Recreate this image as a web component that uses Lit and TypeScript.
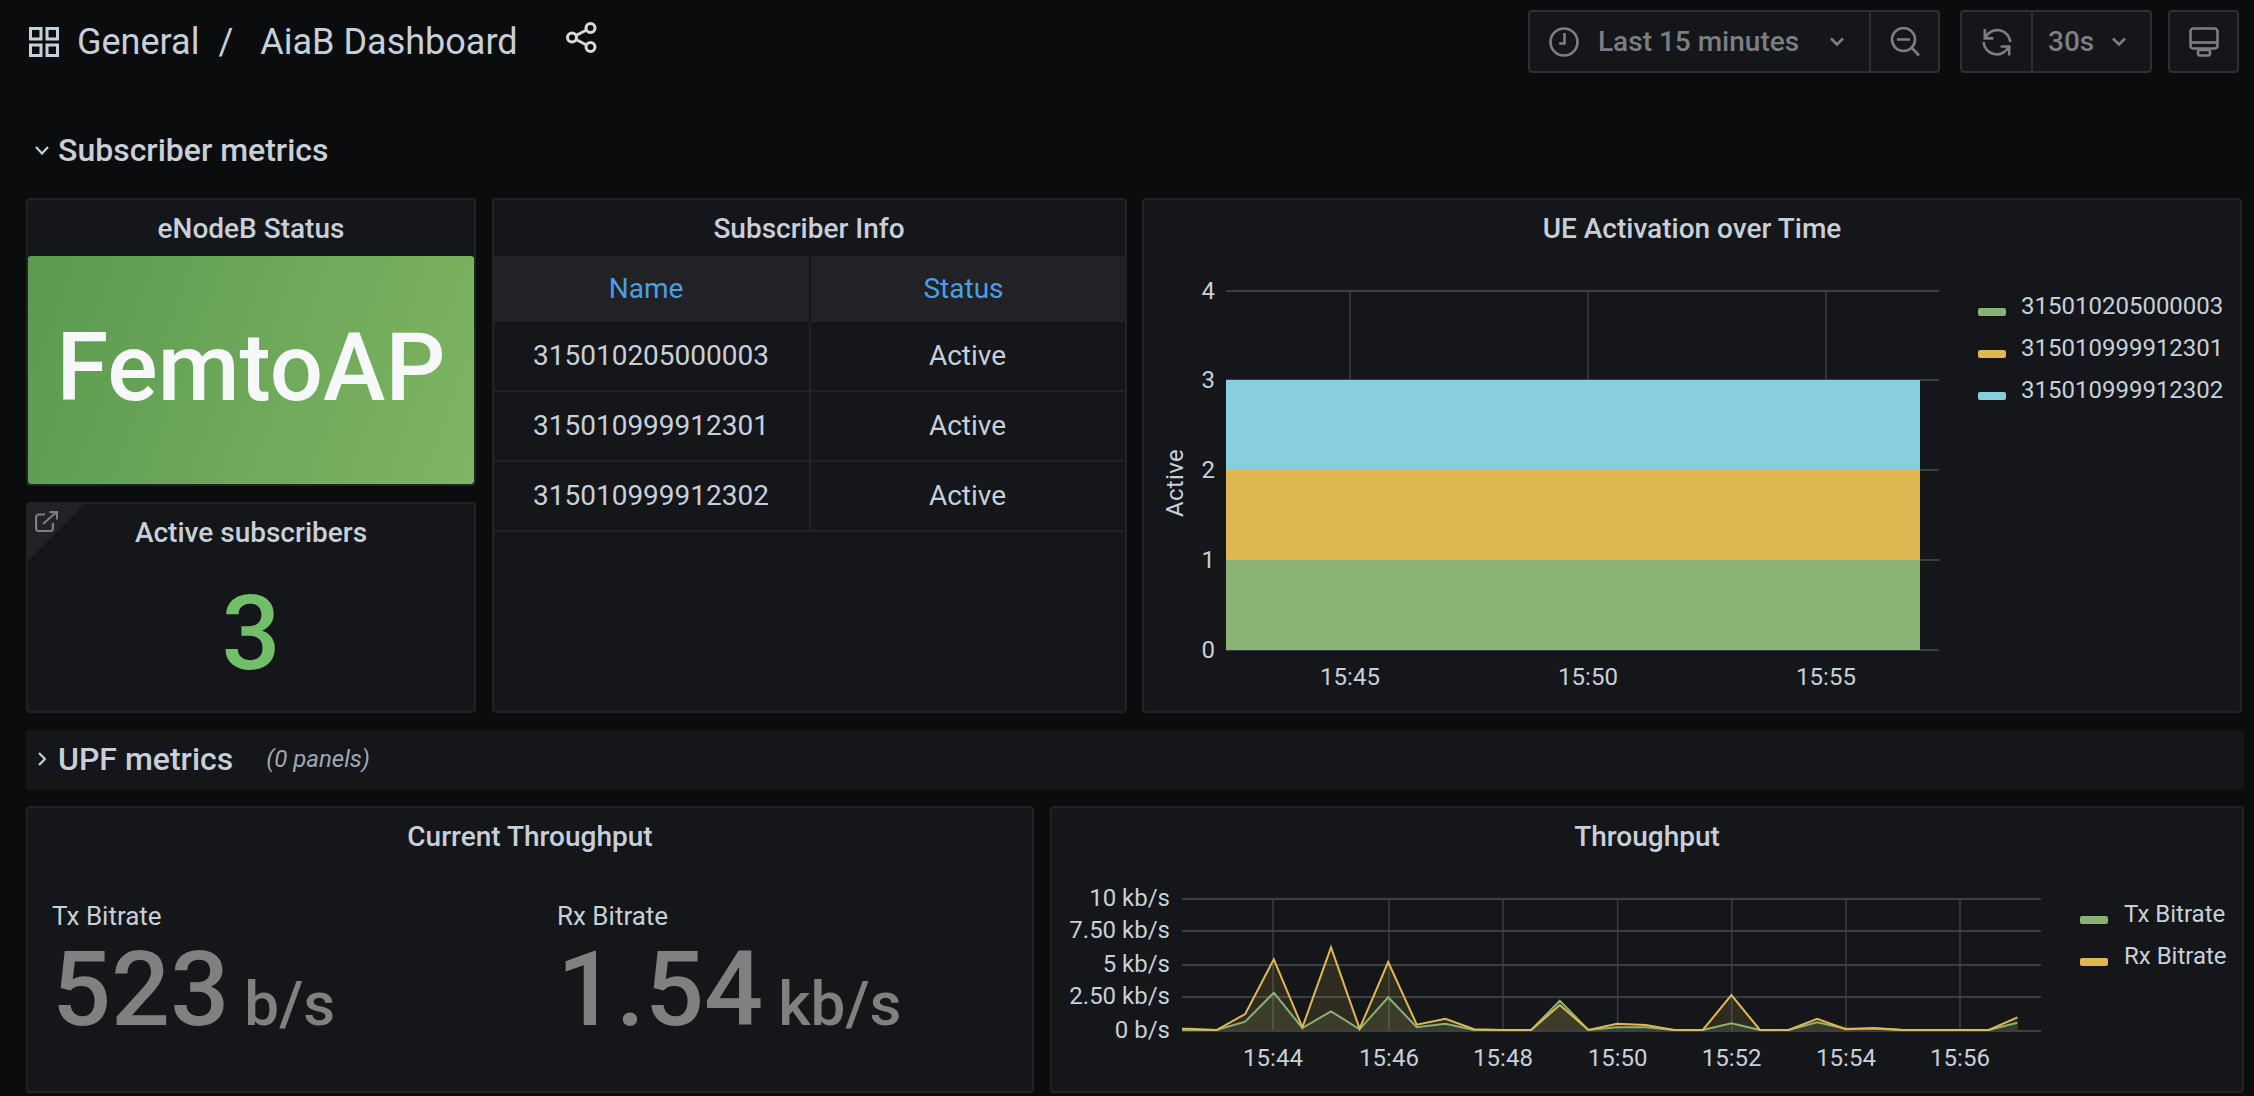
import { LitElement, html, css, svg } from 'lit';
import { customElement } from 'lit/decorators.js';

const GRID = '#3c3e42';
const GREEN = '#8ab274';
const YELLOW = '#e0b852';
const BLUE = '#87cedf';

// heights above the baseline, one sample per 30s
const RX = [1.3, 0, 16, 70.7, 2.7, 82.7, 1.3, 68, 5.3, 11.3, 0.7, 0, 0, 25, 0, 6.3, 5, 0, 0, 35, 0, 0, 11.3, 0.7, 2, 0, 0, 0, 0, 12.7];
const TX = [0, 0, 8.3, 37.3, 2, 18.7, 0.7, 32.7, 2.7, 6.3, 0, 0, 0, 29.3, 0, 2.7, 2.7, 0, 0, 6.7, 0, 0, 7.7, 1.3, 1.3, 0, 0, 0, 0, 7.3];

const SUBSCRIBERS = ['315010205000003', '315010999912301', '315010999912302'];

@customElement('ue-chart')
export class UeChart extends LitElement {
  static styles = css`
    :host { display: flex; flex: 1; min-height: 0; }
    svg { display: block; flex: none; }
    text { font: 400 24px 'Roboto', sans-serif; fill: #c7d0d9; }
    .ylabel { letter-spacing: 0.3px; }
    .legend { display: flex; flex-direction: column; padding: 29px 0 0 33px; }
    .item { display: flex; align-items: center; gap: 15px; height: 42px; font: 400 24px 'Roboto', sans-serif; color: #c7d0d9; white-space: nowrap; }
    .swatch { width: 28px; height: 8px; border-radius: 2px; margin-top: 12px; }
  `;

  render() {
    const ys = [35, 124, 214, 304, 394];
    const xs = [206, 444, 682];
    return html`
      <svg width="801" height="455" viewBox="0 0 801 455">
        ${ys.map((y) => svg`<line x1="82" x2="795" y1=${y} y2=${y} stroke=${GRID} stroke-width="2"></line>`)}
        ${xs.map((x) => svg`<line x1=${x} x2=${x} y1="34" y2="394" stroke=${GRID} stroke-width="1.5"></line>`)}
        <rect x="82" y="124" width="694" height="90" fill=${BLUE}></rect>
        <rect x="82" y="214" width="694" height="90" fill=${YELLOW}></rect>
        <rect x="82" y="304" width="694" height="90" fill=${GREEN}></rect>
        ${ys.map((y, i) => svg`<text x="71" y=${y + 8} text-anchor="end">${4 - i}</text>`)}
        ${xs.map((x, i) => svg`<text x=${x} y="429" text-anchor="middle">15:${45 + i * 5}</text>`)}
        <text class="ylabel" transform="translate(39 227) rotate(-90)" text-anchor="middle">Active</text>
      </svg>
      <div class="legend">
        ${SUBSCRIBERS.map(
          (s, i) => html`<div class="item"><span class="swatch" style="background:${[GREEN, YELLOW, BLUE][i]}"></span>${s}</div>`
        )}
      </div>
    `;
  }
}

@customElement('throughput-chart')
export class ThroughputChart extends LitElement {
  static styles = css`
    :host { display: flex; flex: 1; min-height: 0; }
    svg { display: block; flex: none; }
    text { font: 400 24px 'Roboto', sans-serif; fill: #c7d0d9; }
    .legend { display: flex; flex-direction: column; padding: 29px 0 0 28px; }
    .item { display: flex; align-items: center; gap: 16px; height: 42px; font: 400 24px 'Roboto', sans-serif; color: #c7d0d9; white-space: nowrap; }
    .swatch { width: 28px; height: 8px; border-radius: 2px; margin-top: 12px; }
  `;

  // chart space: page x - 1052, page y - 864
  private points(data: number[]) {
    return data.map((h, i) => `${136 + i * 28.6},${166 - h}`);
  }

  render() {
    const ys = [35, 67, 101, 133, 167];
    const labels = ['10 kb/s', '7.50 kb/s', '5 kb/s', '2.50 kb/s', '0 b/s'];
    const xs = [221, 337, 451, 565.6, 679.7, 794, 908];
    const rx = this.points(RX);
    const tx = this.points(TX);
    const area = (p: string[], first: number) => `M130,${166 - first} L${p.join(' L')} L966,166 L130,166 Z`;
    return html`
      <svg width="1000" height="227" viewBox="0 0 1000 227">
        ${ys.map((y) => svg`<line x1="130" x2="989" y1=${y} y2=${y} stroke=${GRID} stroke-width="2"></line>`)}
        ${xs.map((x) => svg`<line x1=${x} x2=${x} y1="34" y2="167" stroke=${GRID} stroke-width="1.5"></line>`)}
        <path d=${area(tx, 0)} fill=${GREEN} fill-opacity="0.13"></path>
        <path d=${area(rx, 1.3)} fill=${YELLOW} fill-opacity="0.13"></path>
        <polyline points=${`130,166 ${tx.join(' ')}`} fill="none" stroke=${GREEN} stroke-width="2"></polyline>
        <polyline points=${`130,164.7 ${rx.join(' ')}`} fill="none" stroke=${YELLOW} stroke-width="2"></polyline>
        ${ys.map((y, i) => svg`<text x="118" y=${y + 7} text-anchor="end">${labels[i]}</text>`)}
        ${xs.map((x, i) => svg`<text x=${x} y="202" text-anchor="middle">15:${44 + i * 2}</text>`)}
      </svg>
      <div class="legend">
        <div class="item"><span class="swatch" style="background:${GREEN}"></span>Tx Bitrate</div>
        <div class="item"><span class="swatch" style="background:${YELLOW}"></span>Rx Bitrate</div>
      </div>
    `;
  }
}

@customElement('app-root')
export class AppRoot extends LitElement {
  static styles = css`
    :host {
      display: block;
      height: 1096px;
      overflow: hidden;
      background: #0b0c0e;
      color: #c7d0d9;
      font-family: 'Roboto', sans-serif;
    }
    .nav {
      display: flex;
      justify-content: space-between;
      height: 84px;
      padding: 10px 15px 0 29px;
      box-sizing: border-box;
    }
    .crumbs { display: flex; align-items: center; height: 63px; font-size: 36px; color: #c7d0d9; }
    .crumbs svg { display: block; }
    .crumbs .page { margin-left: 18px; }
    .crumbs .sep { margin: 0 27px 0 19px; }
    .crumbs .share { margin-left: 48px; margin-top: -8px; }
    .tools { display: flex; }
    .group {
      display: flex;
      height: 63px;
      box-sizing: border-box;
      background: #141619;
      border: 2px solid #2c3035;
      border-radius: 4px;
      color: #7b7e84;
      font-size: 28px;
      font-weight: 500;
    }
    .group svg { display: block; }
    .cell { display: flex; align-items: center; justify-content: center; }
    .cell + .cell { border-left: 2px solid #2c3035; }
    .range { width: 339px; justify-content: flex-start; padding-left: 19px; box-sizing: border-box; gap: 19px; }
    .range .chev { margin-left: 12px; }
    .zoom { flex: 1; }
    .g1 { width: 412px; }
    .g2 { width: 192px; margin-left: 20px; }
    .g3 { width: 71px; margin-left: 16px; }
    .sync { width: 69px; }
    .every { flex: 1; justify-content: flex-start; padding-left: 15px; gap: 18px; }

    .row-title {
      display: flex;
      align-items: center;
      height: 114px;
      padding: 18px 0 0 35px;
      box-sizing: border-box;
      font-size: 32px;
      font-weight: 500;
      color: #c7d0d9;
      gap: 9px;
    }
    .top {
      display: grid;
      grid-template-columns: 450px 635px 1100px;
      column-gap: 15.5px;
      height: 515px;
      margin: 0 10px 0 26px;
    }
    .left { display: grid; grid-template-rows: 288px 211px; row-gap: 16px; min-height: 0; }
    .panel {
      position: relative;
      display: flex;
      flex-direction: column;
      min-height: 0;
      box-sizing: border-box;
      background: #141619;
      border: 2px solid #202226;
      border-radius: 4px;
      overflow: hidden;
    }
    .title {
      flex: none;
      height: 56px;
      line-height: 58px;
      text-align: center;
      font-size: 28px;
      font-weight: 500;
      color: #c7d0d9;
    }
    .status {
      height: 228px;
      padding-bottom: 4px;
      box-sizing: border-box;
      display: flex;
      align-items: center;
      justify-content: center;
      border-radius: 3px;
      background: linear-gradient(110deg, #5b9a50, #7fb562);
      color: #f7f8fa;
      font-size: 94px;
      font-weight: 500;
    }
    .corner {
      position: absolute;
      left: 0;
      top: 0;
      width: 56px;
      height: 56px;
      background: linear-gradient(135deg, #202226 50%, transparent 50%);
    }
    .corner svg { position: absolute; left: 7px; top: 7px; }
    .big {
      flex: 1;
      display: flex;
      align-items: center;
      justify-content: center;
      padding-bottom: 4px;
      color: #73bf69;
      font-size: 104px;
      font-weight: 500;
    }
    .head, .tr { display: grid; grid-template-columns: 315px 1fr; text-align: center; font-size: 28px; }
    .head { height: 66px; background: #202226; color: #4a9fe6; }
    .head div { display: flex; align-items: center; justify-content: center; padding: 0 10px 2px 0; }
    .head div + div { border-left: 2px solid #141619; padding-right: 8px; }
    .tr { height: 70px; box-sizing: border-box; border-bottom: 2px solid #202226; }
    .tr div { display: flex; align-items: center; justify-content: center; padding-bottom: 2px; }
    .tr div + div { border-left: 2px solid #202226; }

    .upf {
      display: flex;
      align-items: center;
      height: 60px;
      box-sizing: border-box;
      margin: 17px 10px 16px 26px;
      padding: 0 0 2px 12px;
      background: #141619;
      font-size: 32px;
      font-weight: 500;
      color: #c7d0d9;
      gap: 12px;
    }
    .upf small { margin-left: 21px; font-size: 24px; font-weight: 400; font-style: italic; color: #9fa7b3; }
    .bottom {
      display: grid;
      grid-template-columns: 1008px 1194px;
      column-gap: 16px;
      height: 287px;
      margin: 0 10px 0 26px;
    }
    .stats { flex: 1; display: grid; grid-template-columns: 505px 1fr; padding: 33px 0 0 24px; }
    .stat .name { height: 38px; line-height: 38px; font-size: 26px; color: #c7d0d9; }
    .stat .value { display: flex; align-items: baseline; gap: 15px; font-size: 104px; line-height: 110px; font-weight: 500; color: #808080; }
    .stat .value span { font-size: 62px; }
  `;

  render() {
    return html`
      <div class="nav">
        <div class="crumbs">
          <svg width="30" height="30" viewBox="0 0 30 30" fill="none" stroke="#c7d0d9" stroke-width="3">
            <rect x="1.5" y="1.5" width="10.5" height="10.5"></rect>
            <rect x="18" y="1.5" width="10.5" height="10.5"></rect>
            <rect x="1.5" y="18" width="10.5" height="10.5"></rect>
            <rect x="18" y="18" width="10.5" height="10.5"></rect>
          </svg>
          <span class="page">General</span>
          <span class="sep">/</span>
          <span>AiaB Dashboard</span>
          <svg class="share" width="31" height="31" viewBox="0 0 31 31" fill="none" stroke="#d8d9da" stroke-width="3">
            <circle cx="24.5" cy="6" r="4.5"></circle>
            <circle cx="6" cy="15.5" r="4.5"></circle>
            <circle cx="24.5" cy="25" r="4.5"></circle>
            <path d="M10 13.5 20.5 8M10 17.5 20.5 23"></path>
          </svg>
        </div>
        <div class="tools">
          <div class="group g1">
            <div class="cell range">
              <svg width="30" height="30" viewBox="0 0 30 30" fill="none" stroke="#7b7e84" stroke-width="2.6">
                <circle cx="15" cy="15" r="13.5"></circle>
                <path d="M15.5 6v10.5H10"></path>
              </svg>
              <span>Last 15 minutes</span>
              <svg class="chev" width="14" height="9" viewBox="0 0 14 9" fill="none" stroke="#7b7e84" stroke-width="2.6">
                <path d="M1 1.5 7 7.5 13 1.5"></path>
              </svg>
            </div>
            <div class="cell zoom">
              <svg width="30" height="30" viewBox="0 0 30 30" fill="none" stroke="#7b7e84" stroke-width="2.6">
                <circle cx="13.5" cy="12.5" r="11.5"></circle>
                <path d="M7 12.5h13M22 21l7 7.5"></path>
              </svg>
            </div>
          </div>
          <div class="group g2">
            <div class="cell sync">
              <svg width="30" height="30" viewBox="0 0 30 30" fill="none" stroke="#7b7e84" stroke-width="2.6">
                <path d="M2.8 2v9.4h8.6"></path>
                <path d="M3.4 10.5A13.2 13.2 0 0 1 28.4 15"></path>
                <path d="M27.2 28.5v-9h-8.6"></path>
                <path d="M26.6 20A13.2 13.2 0 0 1 1.6 15"></path>
              </svg>
            </div>
            <div class="cell every">
              <span>30s</span>
              <svg width="14" height="9" viewBox="0 0 14 9" fill="none" stroke="#7b7e84" stroke-width="2.6">
                <path d="M1 1.5 7 7.5 13 1.5"></path>
              </svg>
            </div>
          </div>
          <div class="group g3">
            <div class="cell zoom">
              <svg width="30" height="30" viewBox="0 0 30 30" fill="none" stroke="#7b7e84" stroke-width="2.6">
                <rect x="1.5" y="1.5" width="27" height="20" rx="3"></rect>
                <path d="M1.5 15.5h27"></path>
                <rect x="9" y="23" width="12" height="5.5" rx="2"></rect>
              </svg>
            </div>
          </div>
        </div>
      </div>

      <div class="row-title">
        <svg width="14" height="9" viewBox="0 0 14 9" fill="none" stroke="#c7d0d9" stroke-width="2.2">
          <path d="M1 1 7 7.5 13 1"></path>
        </svg>
        <span>Subscriber metrics</span>
      </div>

      <div class="top">
        <div class="left">
          <div class="panel">
            <div class="title">eNodeB Status</div>
            <div class="status">FemtoAP</div>
          </div>
          <div class="panel">
            <div class="corner">
              <svg width="23" height="21" viewBox="0 0 23 21" fill="none" stroke="#7b7e84" stroke-width="2.2">
                <path d="M10 3.5H3.5a2.4 2.4 0 0 0-2.4 2.4v11.7a2.4 2.4 0 0 0 2.4 2.4h12a2.4 2.4 0 0 0 2.4-2.4V12"></path>
                <path d="M8 13 21 1.5M14.5 1.2H22V8.5"></path>
              </svg>
            </div>
            <div class="title">Active subscribers</div>
            <div class="big">3</div>
          </div>
        </div>

        <div class="panel">
          <div class="title">Subscriber Info</div>
          <div class="head"><div>Name</div><div>Status</div></div>
          ${SUBSCRIBERS.map((s) => html`<div class="tr"><div>${s}</div><div>Active</div></div>`)}
        </div>

        <div class="panel">
          <div class="title">UE Activation over Time</div>
          <ue-chart></ue-chart>
        </div>
      </div>

      <div class="upf">
        <svg width="8" height="14" viewBox="0 0 8 14" fill="none" stroke="#c7d0d9" stroke-width="2.2">
          <path d="M1 1 7 7 1 13"></path>
        </svg>
        <span>UPF metrics</span>
        <small>(0 panels)</small>
      </div>

      <div class="bottom">
        <div class="panel">
          <div class="title">Current Throughput</div>
          <div class="stats">
            <div class="stat">
              <div class="name">Tx Bitrate</div>
              <div class="value">523<span>b/s</span></div>
            </div>
            <div class="stat">
              <div class="name">Rx Bitrate</div>
              <div class="value">1.54<span>kb/s</span></div>
            </div>
          </div>
        </div>
        <div class="panel">
          <div class="title">Throughput</div>
          <throughput-chart></throughput-chart>
        </div>
      </div>
    `;
  }
}
